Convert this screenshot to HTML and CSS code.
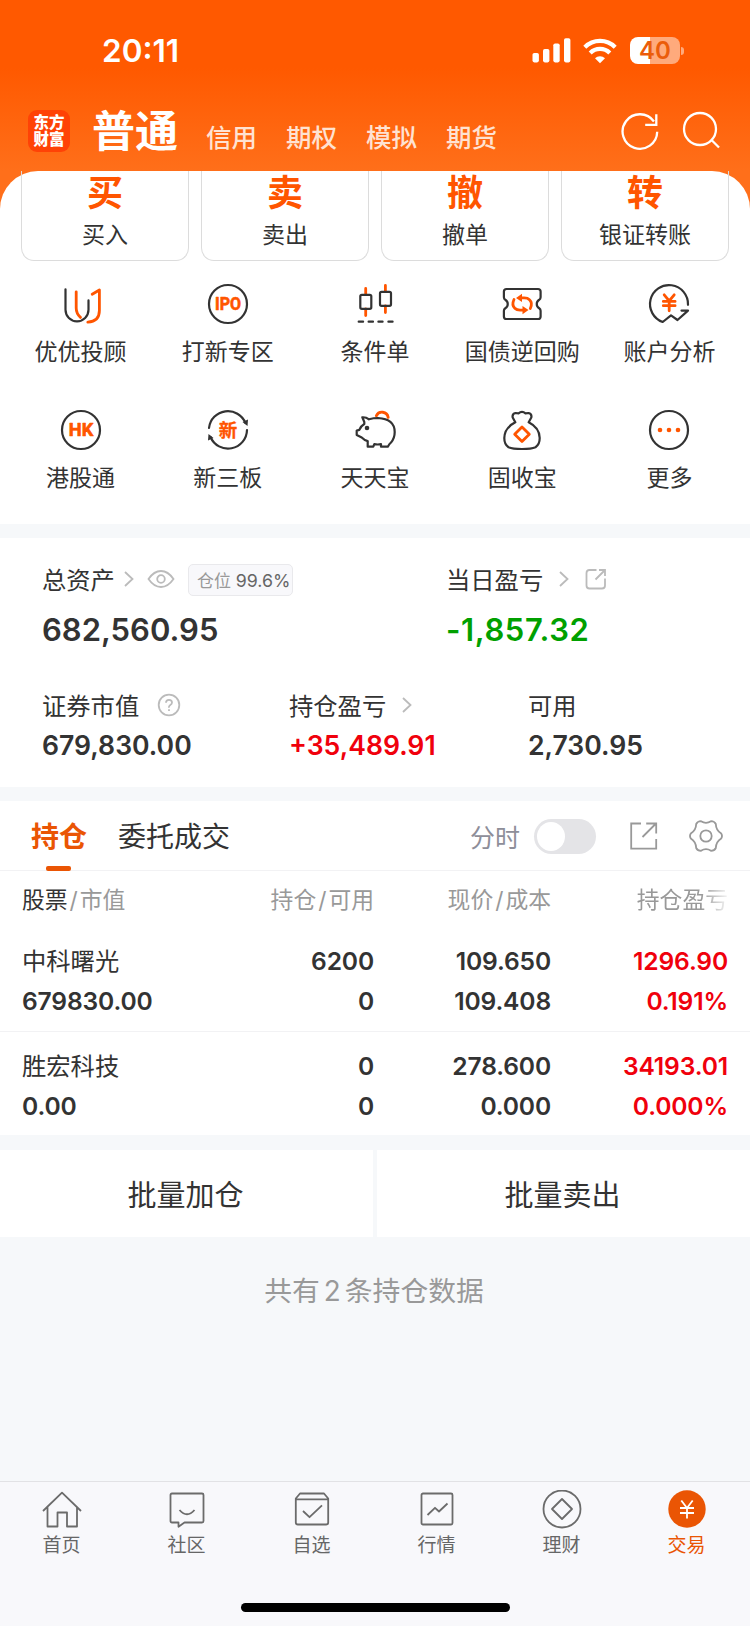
FILE: index.html
```html
<!DOCTYPE html>
<html lang="zh-CN">
<head>
  <meta charset="UTF-8" />
  <meta name="viewport" content="width=device-width, initial-scale=1.0"/>
  <title>交易</title>
  <link rel="stylesheet" href="styles.css">
</head>
<body>

  <!-- Header -->
  <header class="header">
    <div class="status-bar">
      <span class="time">20:11</span>
      <div class="status-icons">
        <svg width="39" height="26" viewBox="0 0 39 26" fill="#fff">
          <rect x="0.5" y="15" width="6.4" height="9.4" rx="1.8"/>
          <rect x="11" y="11" width="6.4" height="13.4" rx="1.8"/>
          <rect x="21.3" y="5.5" width="6.4" height="18.9" rx="1.8"/>
          <rect x="32" y="0.3" width="6.4" height="24.1" rx="1.8"/>
        </svg>
        <svg class="wifi" width="34" height="26" viewBox="0 0 34 26" fill="none" stroke="#fff" stroke-width="4.2">
          <path d="M1.8 9.2a21.5 21.5 0 0 1 30.4 0"/>
          <path d="M7.2 15a13.9 13.9 0 0 1 19.6 0"/>
          <path d="M17 25.3l-5-5a7.1 7.1 0 0 1 10 0z" fill="#fff" stroke="none"/>
        </svg>
        <div class="battery"><span>40</span></div>
        <i class="battery-cap"></i>
      </div>
    </div>
    <div class="title-bar">
      <div class="logo"><span>东方</span><span>财富</span></div>
      <nav class="account-tabs">
        <strong>普通</strong>
        <span>信用</span>
        <span>期权</span>
        <span>模拟</span>
        <span>期货</span>
      </nav>
      <svg class="refresh" width="40" height="40" viewBox="0 0 40 40" fill="none" stroke="#fff" stroke-width="2.3">
        <path d="M37.2 20.8A17.3 17.3 0 1 1 34 10.5"/>
        <path d="M36.3 3.3v10.6H25.2"/>
      </svg>
      <svg class="search" width="40" height="40" viewBox="0 0 40 40" fill="none" stroke="#fff" stroke-width="2.3">
        <circle cx="19" cy="18" r="16"/>
        <path d="M30 28.5l8 8"/>
      </svg>
    </div>
  </header>

  <main>
    <!-- Trade -->
    <section class="trade">
      <div class="trade-cards">
        <div class="trade-card"><b>买</b><span>买入</span></div>
        <div class="trade-card"><b>卖</b><span>卖出</span></div>
        <div class="trade-card"><b>撤</b><span>撤单</span></div>
        <div class="trade-card"><b>转</b><span>银证转账</span></div>
      </div>

      <div class="services">
        <div class="service">
          <svg class="line-icon" viewBox="0 0 44 44">
            <path d="M6.5 7.3v20.5a11.5 11.5 0 0 0 23 0V18.4"/>
            <path class="accent" d="M17.2 9.8V26q0 5.5 4.3 9.4M33.2 12.3L40.4 8v20.5q0 11-11.6 11.6"/>
          </svg>
          <span>优优投顾</span>
        </div>
        <div class="service">
          <svg class="line-icon" viewBox="0 0 44 44">
            <circle cx="22" cy="22" r="19"/>
            <text x="22" y="28.2" textLength="26" lengthAdjust="spacingAndGlyphs">IPO</text>
          </svg>
          <span>打新专区</span>
        </div>
        <div class="service">
          <svg class="line-icon" viewBox="0 0 44 44">
            <path class="accent" d="M12.7 6.5v6M12.7 27v6.5M32.4 3.5v6M32.4 24v6.5"/>
            <rect x="7.3" y="12.8" width="11" height="14" rx="1.5"/>
            <rect x="27" y="9.8" width="11" height="14" rx="1.5"/>
            <path d="M5.7 39.7h4.4M15.6 39.7H20M25.4 39.7h4.2M35.4 39.7h4.2"/>
          </svg>
          <span>条件单</span>
        </div>
        <div class="service">
          <svg class="line-icon" viewBox="0 0 44 44">
            <path d="M6.5 7H38q2.600 0 2.600 2.600v5.600q0 1.600-1.400 2.500a5 5 0 0 0 0 8.600q1.400.9 1.400 2.500v5.600q0 2.600-2.600 2.600H6.500q-2.600 0-2.600-2.600v-5.600q0-1.600 1.400-2.500a5 5 0 0 0 0-8.600q-1.400-.9-1.400-2.500V9.600q0-2.600 2.600-2.600z"/>
            <path class="accent" d="M14 17.500q-2.600 5.500.8 8.700 1.800 1.900 5.300 1.900h3M30.300 26.500q2.600-5.500-.8-8.700-1.800-1.900-5.300-1.900h-3"/>
            <path class="accent-fill" d="M22.500 24l6 4.100-6 4.100zM22 11.800v8.200l-6-4.100z"/>
          </svg>
          <span>国债逆回购</span>
        </div>
        <div class="service">
          <svg class="line-icon" viewBox="0 0 44 44">
            <path d="M41 22.800A19 19 0 1 0 15.700 40l8.300-6.600 6.500 4.600L41 28.600h-6.500"/>
            <path class="accent" d="M17.200 12.800l5 6 5-6M16.300 19.400h11.800M16.300 23.700h11.800M22.200 18.800v10"/>
          </svg>
          <span>账户分析</span>
        </div>

        <div class="service">
          <svg class="line-icon" viewBox="0 0 44 44">
            <circle cx="22" cy="22" r="19"/>
            <text x="22" y="28.400" textLength="24.500" lengthAdjust="spacingAndGlyphs">HK</text>
          </svg>
          <span>港股通</span>
        </div>
        <div class="service">
          <svg class="line-icon" viewBox="0 0 44 44">
            <path d="M3 20A19 19 0 0 1 39.500 15M41 22A19 19 0 0 1 4.500 29"/>
            <path class="dark-fill" d="M36.500 14l5.500-2.500-.5 6.500zM7.500 30l-5.500 2.500.5-6.500z"/>
            <text class="cjk" x="22" y="28.600">新</text>
          </svg>
          <span>新三板</span>
        </div>
        <div class="service">
          <svg class="line-icon" viewBox="0 0 44 44">
            <path class="accent" d="M23.300 7.800a6.300 6.300 0 0 1 11.900 1.600"/>
            <path d="M11.300 14L9.300 9.300q3.700-.3 6.700 2 4.500-1.300 9-1.300 16.700 1 16.700 14 0 6.300-3.700 10.500-1.500 1.300-3.200 4.200H28v-2.500q-3.300.6-6.700 0l-1 2.500h-5.600v-5.600q-3.500-1-6-3.600l-5-2.400v-4.500l2.600-.7q1.200-3.600 5-5.900z"/>
            <circle class="dark-fill" cx="14" cy="20" r="2.300"/>
          </svg>
          <span>天天宝</span>
        </div>
        <div class="service">
          <svg class="line-icon" viewBox="0 0 44 44">
            <path d="M15.300 14.300L12.700 9.500q-.8-3.600 2.800-4.500l3 .3q3.500-3 7 0l3-.3q3.600.9 2.800 4.500l-2.600 4.800q10.800 5.500 11 15.700 0 6.500-4.200 9.200-4 1.800-13.500 1.800T8.500 39.200Q4.300 36.500 4.300 30q.2-10.200 11-15.700z"/>
            <path class="accent" d="M22 19l7.300 7.300L22 33.600l-7.300-7.300z"/>
          </svg>
          <span>固收宝</span>
        </div>
        <div class="service">
          <svg class="line-icon" viewBox="0 0 44 44">
            <circle cx="22" cy="22" r="19"/>
            <g class="accent-fill"><circle cx="13" cy="22" r="2.300"/><circle cx="22" cy="22" r="2.300"/><circle cx="31" cy="22" r="2.300"/></g>
          </svg>
          <span>更多</span>
        </div>
      </div>
    </section>

    <!-- Assets -->
    <section class="assets">
      <div class="asset-row main-row">
        <div class="asset">
          <div class="label">
            <span>总资产</span>
            <svg class="chevron" width="10" height="16" viewBox="0 0 10 16"><path d="M1 1l7.500 7L1 15"/></svg>
            <svg class="eye" width="28" height="20" viewBox="0 0 28 20"><path d="M1.500 10Q7 2 14 2t12.500 8Q21 18 14 18T1.500 10z"/><circle cx="14" cy="10" r="3.800"/></svg>
            <span class="position">仓位 <em>99.6%</em></span>
          </div>
          <div class="value">682,560.95</div>
        </div>
        <div class="asset">
          <div class="label">
            <span>当日盈亏</span>
            <svg class="chevron" width="10" height="16" viewBox="0 0 10 16"><path d="M1 1l7.500 7L1 15"/></svg>
            <svg class="share" width="22" height="22" viewBox="0 0 22 22"><path d="M11.500 2H4.500Q1.500 2 1.500 5v12.500q0 3 3 3H17q3 0 3-3v-7M10.500 11.500L20 2M14 2h6v6"/></svg>
          </div>
          <div class="value down">-1,857.32</div>
        </div>
      </div>
      <div class="asset-row sub-row">
        <div class="asset">
          <div class="label">
            <span>证券市值</span>
            <svg class="help" width="24" height="24" viewBox="0 0 24 24"><circle cx="12" cy="12" r="10.300"/><path d="M9 9.800Q9 6.800 12 6.800t3 2.700q0 1.500-1.700 2.600T12 14.800M12 16.200v1.800"/></svg>
          </div>
          <div class="value">679,830.00</div>
        </div>
        <div class="asset">
          <div class="label">
            <span>持仓盈亏</span>
            <svg class="chevron" width="10" height="16" viewBox="0 0 10 16"><path d="M1 1l7.500 7L1 15"/></svg>
          </div>
          <div class="value up">+35,489.91</div>
        </div>
        <div class="asset">
          <div class="label"><span>可用</span></div>
          <div class="value">2,730.95</div>
        </div>
      </div>
    </section>

    <!-- Holdings -->
    <section class="holdings">
      <div class="holding-tabs">
        <span class="tab active">持仓</span>
        <span class="tab">委托成交</span>
        <span class="switch-label">分时</span>
        <span class="switch"></span>
        <svg class="tool export" width="30" height="30" viewBox="0 0 30 30"><path d="M12 2.500H2.200v25.200h25V18M13.500 16L27 2.500M17.200 2.500h10v10"/></svg>
        <svg class="tool" width="34" height="34" viewBox="0 0 34 34"><path d="M32.200 14.500Q33.800 17 32.200 19.500 27 22.700 26.800 29 25.500 31.700 22 31.800 17 28.500 12 31.800 8.500 31.700 7.200 29 7 22.700 1.800 19.500.2 17 1.800 14.500 7 11.300 7.200 5 8.500 2.300 12 2.200 17 5.500 22 2.200 25.500 2.300 26.800 5 27 11.300 32.200 14.500z"/><circle cx="17" cy="17" r="5.700"/></svg>
      </div>

      <div class="holding-row holding-head">
        <div><em>股票</em><i>/</i>市值</div>
        <div>持仓<i>/</i>可用</div>
        <div>现价<i>/</i>成本</div>
        <div class="fade">持仓盈亏</div>
      </div>
      <div class="holding-row">
        <div><span class="name">中科曙光</span><span>679830.00</span></div>
        <div><span>6200</span><span>0</span></div>
        <div><span>109.650</span><span>109.408</span></div>
        <div class="up"><span>1296.90</span><span>0.191%</span></div>
      </div>
      <div class="holding-row">
        <div><span class="name">胜宏科技</span><span>0.00</span></div>
        <div><span>0</span><span>0</span></div>
        <div><span>278.600</span><span>0.000</span></div>
        <div class="up"><span>34193.01</span><span>0.000%</span></div>
      </div>
    </section>

    <section class="batch">
      <button>批量加仓</button>
      <button>批量卖出</button>
    </section>

    <p class="total">共有<span>2</span>条持仓数据</p>
  </main>

  <!-- Bottom nav -->
  <footer class="bottom-nav">
    <div class="nav-items">
      <a class="nav-item">
        <svg viewBox="0 0 40 40"><path d="M1 21L20 2.700 39 21M5.500 17v19.500h10V22.500h9.500v14h10V17"/></svg>
        <span>首页</span>
      </a>
      <a class="nav-item">
        <svg viewBox="0 0 40 40"><path d="M5 3.500h30q1.500 0 1.500 1.500v26q0 1.500-1.500 1.500H17.500l-6 4.200v-4.200H5q-1.500 0-1.500-1.500V5q0-1.500 1.500-1.500z"/><path d="M12.500 20q7.500 8.500 15 0"/></svg>
        <span>社区</span>
      </a>
      <a class="nav-item">
        <svg viewBox="0 0 40 40"><path d="M3.800 8.500L8 3.500h24l4.200 5v24q0 2-2 2H5.800q-2 0-2-2zM3.800 9.300h32.400"/><path d="M11 21l6.500 6.200L30 15.300"/></svg>
        <span>自选</span>
      </a>
      <a class="nav-item">
        <svg viewBox="0 0 40 40"><rect x="4.500" y="3.500" width="31" height="31" rx="1.500"/><path d="M10.500 25l7.500-7.200 4 3.700 8.500-8"/></svg>
        <span>行情</span>
      </a>
      <a class="nav-item">
        <svg viewBox="0 0 40 40"><circle cx="20" cy="19" r="18.500"/><path d="M20 9l10 10-10 10-10-10z"/></svg>
        <span>理财</span>
      </a>
      <a class="nav-item active">
        <svg viewBox="0 0 40 40"><circle cx="20" cy="19" r="18.700"/><path d="M14.300 10.500L20 18l5.700-7.500M13 18h14M13 23h14M20 18v10.500"/></svg>
        <span>交易</span>
      </a>
    </div>
    <div class="home-indicator"></div>
  </footer>

</body>
</html>
```
FILE: styles.css
```css
/* === GLOBAL === */
* {
  box-sizing: border-box;
  margin: 0;
  padding: 0;
}

body {
  width: 750px;
  height: 1626px;
  display: flex;
  flex-direction: column;
  overflow: hidden;
  background: #f6f8fa;
  color: #333;
  font-family: Inter, "Noto Sans CJK SC", sans-serif;
}

svg {
  display: block;
  flex: none;
}

em,
i {
  font-style: normal;
}

.up {
  color: #f0000c;
}

.down {
  color: #00a000;
}

/* === HEADER === */
.header {
  height: 211px;
  margin-bottom: -40px;
  flex: none;
  background: linear-gradient(#ff5900 0, #ff5900 68px, #ff6f1a 171px);
  color: #fff;
}

.status-bar {
  height: 96px;
  padding: 32px 66px 0 102px;
  display: flex;
  justify-content: space-between;
}

.time {
  font-size: 31.5px;
  font-weight: 600;
  line-height: 38px;
}

.status-icons {
  display: flex;
  align-items: center;
  height: 37px;
}

.wifi {
  margin-left: 12px;
}

.battery {
  width: 50px;
  height: 27px;
  margin-left: 13px;
  border-radius: 8px;
  background: linear-gradient(90deg, #fff 20px, #ffaa7c 20px);
  color: #eb5c0a;
  font-size: 24px;
  font-weight: 600;
  line-height: 27px;
  text-align: center;
}

.battery-cap {
  width: 3px;
  height: 8px;
  margin-left: 1px;
  border-radius: 0 4px 4px 0;
  background: #ffaa7c;
}

.title-bar {
  height: 75px;
  padding: 0 29px 0 28px;
  display: flex;
  align-items: center;
}

.logo {
  width: 42px;
  height: 42px;
  margin-top: -5px;
  display: flex;
  flex-direction: column;
  align-items: center;
  justify-content: center;
  border-radius: 9px;
  background: #ff4206;
  font-size: 15.5px;
  font-weight: 900;
  line-height: 17px;
}

.account-tabs {
  flex: 1;
  margin: -6px 0 0 22px;
  display: flex;
  align-items: baseline;
  color: #ffe2d2;
  font-size: 25.5px;
  font-weight: 500;
}

.account-tabs strong {
  margin-right: 28px;
  color: #fff;
  font-size: 43px;
  line-height: 60px;
}

.account-tabs span {
  margin-right: 29px;
}

.refresh {
  margin: -5px 21px 0 0;
}

.search {
  margin: -5px 0 0;
}

/* === TRADE === */
.trade {
  height: 353px;
  padding: 0 21px;
  border-radius: 38px 38px 0 0;
  background: #fff;
}

.trade-cards {
  display: flex;
  gap: 12px;
}

.trade-card {
  width: 168px;
  height: 90px;
  display: flex;
  flex-direction: column;
  align-items: center;
  border: 1px solid #dcdcdc;
  border-top: 0;
  border-radius: 0 0 13px 13px;
}

.trade-card b {
  margin-top: -3px;
  color: #ff5500;
  font-size: 36px;
  font-weight: 700;
  line-height: 50px;
}

.trade-card span {
  font-size: 23px;
  line-height: 34px;
}

.services {
  margin: 21px -14px 0;
  display: grid;
  grid-template-columns: repeat(5, 1fr);
  row-gap: 39px;
}

.service {
  display: flex;
  flex-direction: column;
  align-items: center;
  gap: 9px;
  font-size: 23px;
  line-height: 34px;
}

.line-icon {
  width: 44px;
  height: 44px;
  fill: none;
  stroke: #333;
  stroke-width: 2.2;
  stroke-linecap: round;
  stroke-linejoin: round;
}

.line-icon .accent {
  stroke: #ff5500;
  stroke-width: 2.8;
}

.line-icon .accent-fill {
  fill: #ff5500;
  stroke: none;
}

.line-icon .dark-fill {
  fill: #333;
  stroke: none;
}

.line-icon text {
  fill: #ff5500;
  stroke: #ff5500;
  stroke-width: 0.6;
  font-family: Roboto, sans-serif;
  font-size: 17.5px;
  font-weight: 700;
  text-anchor: middle;
}

.line-icon .cjk {
  stroke-width: 0.3;
  font-family: "Noto Sans CJK SC", sans-serif;
  font-size: 18.5px;
}

/* === ASSETS === */
.assets {
  height: 249px;
  margin-top: 14px;
  padding: 22px 42px 0;
  background: #fff;
}

.assets svg {
  fill: none;
  stroke: #bbb;
  stroke-width: 1.8;
}

.asset-row {
  display: grid;
}

.main-row {
  grid-template-columns: 404px 1fr;
}

.sub-row {
  margin-top: 36px;
  grid-template-columns: 247px 239px 1fr;
}

.label {
  height: 36px;
  display: flex;
  align-items: center;
  font-size: 24.3px;
  white-space: nowrap;
}

.label svg {
  margin-top: 2px;
}

.chevron {
  margin-left: 9px;
}

.eye {
  margin-left: 13px;
}

.share,
.asset + .asset .chevron {
  margin-left: 16px;
}

.help {
  margin-left: 18px;
}

.position {
  height: 32px;
  margin: 3px 0 0 13px;
  padding: 0 2px 0 8px;
  border: 1px solid #e9e9ec;
  border-radius: 5px;
  background: #f8f8fb;
  color: #999;
  font-size: 17px;
  line-height: 31px;
}

.position em {
  color: #666;
  font-size: 17.8px;
}

.value {
  font-weight: 600;
  white-space: nowrap;
}

.main-row .value {
  margin-top: 14px;
  font-size: 31px;
  line-height: 40px;
}

.main-row .down {
  letter-spacing: 0.6px;
}

.sub-row .value {
  margin-top: 5px;
  font-size: 26.6px;
  line-height: 36px;
}

/* === HOLDINGS === */
.holdings {
  height: 334px;
  margin-top: 14px;
  background: #fff;
}

.holding-tabs {
  height: 70px;
  padding: 1px 27px 0 31px;
  display: flex;
  align-items: center;
  border-bottom: 1px solid #f2f2f4;
}

.tab {
  position: relative;
  margin-right: 31px;
  padding-top: 2px;
  font-size: 28px;
  line-height: 67px;
}

.tab.active {
  color: #ea5504;
  font-weight: 700;
}

.tab.active::after {
  content: "";
  position: absolute;
  left: 15px;
  bottom: 0;
  width: 25px;
  height: 5px;
  border-radius: 2px;
  background: #ea5504;
}

.switch-label {
  margin-left: auto;
  color: #8e8e99;
  font-size: 25px;
}

.switch {
  width: 62px;
  height: 35px;
  margin-left: 14px;
  padding: 3px;
  border-radius: 18px;
  background: #e4e4e7;
}

.switch::before {
  content: "";
  display: block;
  width: 28px;
  height: 29px;
  border-radius: 50%;
  background: #fff;
}

.tool {
  fill: none;
  stroke: #999;
  stroke-width: 1.8;
}

.export {
  margin: 0 30px 0 33px;
}

.holding-row {
  height: 104px;
  padding: 15px 22px 0;
  display: grid;
  grid-template-columns: 175px 177px 177px 177px;
  font-size: 24.6px;
  font-weight: 600;
  line-height: 39.5px;
  text-align: right;
  letter-spacing: -0.15px;
}

.holding-row + .holding-row + .holding-row {
  border-top: 1px solid #f2f2f4;
}

.holding-row div:first-child {
  text-align: left;
}

.holding-row span {
  display: block;
}

.holding-row .name {
  font-size: 24.3px;
  font-weight: 400;
  letter-spacing: 0;
}

.holding-head {
  height: 56px;
  padding-top: 9px;
  color: #999;
  font-size: 22.8px;
  font-weight: 400;
  letter-spacing: 0;
}

.holding-head em {
  color: #333;
}

.holding-head i {
  margin: 0 2px;
}

.fade {
  -webkit-mask: linear-gradient(90deg, #000 150px, transparent 180px);
  mask: linear-gradient(90deg, #000 150px, transparent 180px);
}

.batch {
  height: 87px;
  margin-top: 15px;
  display: flex;
  gap: 4px;
}

.batch button {
  flex: 1;
  padding: 0 2px 2px 0;
  border: 0;
  background: #fff;
  color: #333;
  font-family: inherit;
  font-size: 29px;
}

.total {
  margin: 32px 2px 0 0;
  color: #999;
  font-size: 27.8px;
  line-height: 44px;
  text-align: center;
}

.total span {
  margin: 0 4px;
}

/* === BOTTOM NAV === */
.bottom-nav {
  height: 145px;
  margin-top: auto;
  flex: none;
  border-top: 1px solid #e2e2e5;
  background: #f8f8fb;
}

.nav-items {
  height: 121px;
  padding-top: 8px;
  display: flex;
}

.nav-item {
  width: 125px;
  display: flex;
  flex-direction: column;
  align-items: center;
  color: #666;
  font-size: 19px;
  line-height: 32px;
}

.nav-item span {
  margin-right: 2px;
}

.nav-item svg {
  width: 40px;
  height: 40px;
  margin-right: 1px;
  fill: none;
  stroke: #6b6b6b;
  stroke-width: 1.8;
  stroke-linejoin: round;
}

.nav-item.active {
  color: #ea5504;
}

.nav-item.active svg {
  stroke: #fff;
}

.nav-item.active circle {
  fill: #ea5504;
  stroke: none;
}

.home-indicator {
  width: 269px;
  height: 9px;
  margin: 0 auto;
  border-radius: 5px;
  background: #000;
}
```
